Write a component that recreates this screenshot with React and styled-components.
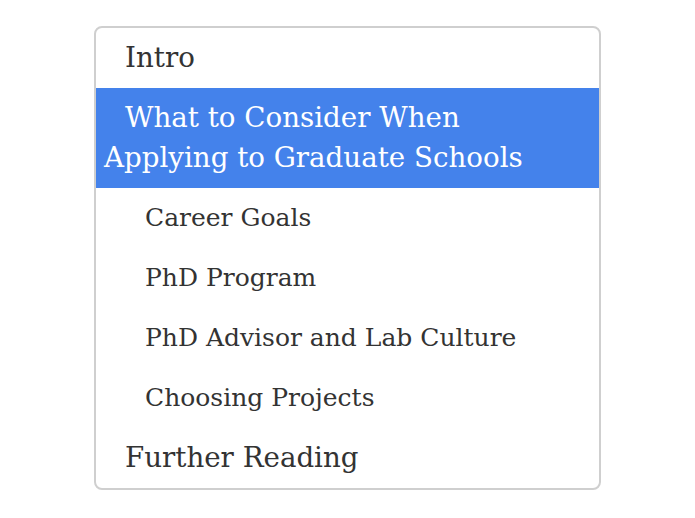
import React from 'react';
import styled, { createGlobalStyle } from 'styled-components';

const GlobalStyle = createGlobalStyle`
  body {
    margin: 0;
    background: #ffffff;
    font-family: "DejaVu Serif", "Liberation Serif", serif;
  }
`;

const Page = styled.div`
  display: flex;
  justify-content: center;
  padding-top: 26px;
`;

const Toc = styled.ul`
  list-style: none;
  margin: 0;
  padding: 0;
  width: 503px;
  border: 2px solid #cfcfcf;
  border-radius: 8px;
  overflow: hidden;
`;

const Item = styled.li`
  padding: 10px 10px 10px ${({ level }) => (level > 1 ? 28 : 8)}px;
  text-indent: 21px;
  line-height: 40px;
  font-size: ${({ level }) => (level > 1 ? 25 : 27.7)}px;
  color: ${({ active }) => (active ? '#ffffff' : '#333333')};
  background: ${({ active }) => (active ? '#4482eb' : 'transparent')};
`;

const items = [
  { title: 'Intro', level: 1 },
  { title: 'What to Consider When Applying to Graduate Schools', level: 1, active: true },
  { title: 'Career Goals', level: 2 },
  { title: 'PhD Program', level: 2 },
  { title: 'PhD Advisor and Lab Culture', level: 2 },
  { title: 'Choosing Projects', level: 2 },
  { title: 'Further Reading', level: 1 },
];

const App = () => (
  <>
    <GlobalStyle />
    <Page>
      <Toc>
        {items.map(item => (
          <Item key={item.title} level={item.level} active={item.active}>
            {item.title}
          </Item>
        ))}
      </Toc>
    </Page>
  </>
);

export default App;
